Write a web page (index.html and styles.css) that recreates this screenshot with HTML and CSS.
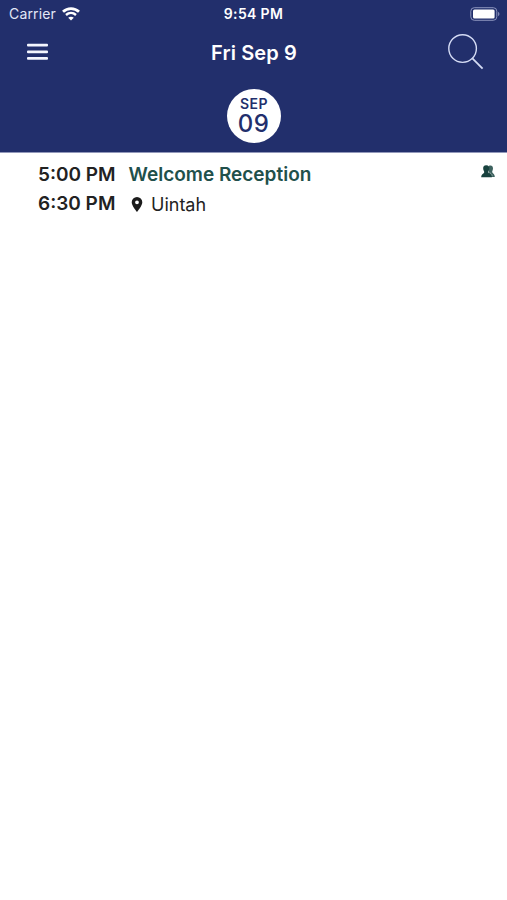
FILE: index.html
```html
<!DOCTYPE html>
<html lang="en">
<head>
  <meta charset="UTF-8">
  <meta name="viewport" content="width=device-width, initial-scale=1.0">
  <title>Schedule</title>
  <link rel="stylesheet" href="styles.css">
</head>
<body>
  <header class="header">
    <!-- Status bar -->
    <div class="status-bar">
      <div class="carrier">
        <span class="carrier-name">Carrier</span>
        <svg class="wifi" width="18" height="14" viewBox="0 0 18 14" fill="none" stroke="#fff">
          <path d="M1 4.8C5.500.6 12.500.6 17 4.800" stroke-width="2.8"/>
          <path d="M4 8c2.900-2.600 7.100-2.600 10 0" stroke-width="2.4"/>
          <path d="M9 13.600 6.200 10.800c1.600-1.500 4-1.500 5.600 0z" fill="#fff" stroke="none"/>
        </svg>
      </div>
      <span class="clock">9:54 PM</span>
      <svg class="battery" width="30" height="14" viewBox="0 0 30 14">
        <rect x=".8" y=".7" width="26" height="12.6" rx="3.5" fill="none" stroke="#8c94bd"/>
        <rect x="3" y="2.6" width="21.6" height="8.8" rx="1.5" fill="#fff"/>
        <path d="M28.1 4.800c1.800.8 1.800 3.600 0 4.400z" fill="#8c94bd"/>
      </svg>
    </div>

    <!-- Title bar -->
    <div class="nav-bar">
      <button class="icon-btn" aria-label="Menu">
        <svg width="21" height="18" viewBox="0 0 21 18" fill="#f4f6ff">
          <rect y=".8" width="21" height="2.8" rx="1"/>
          <rect y="7.4" width="21" height="2.8" rx="1"/>
          <rect y="14" width="21" height="2.8" rx="1"/>
        </svg>
      </button>
      <h1 class="title">Fri Sep 9</h1>
      <button class="icon-btn search" aria-label="Search">
        <svg width="36" height="36" viewBox="0 0 36 36" fill="none" stroke="#d5dcf5" stroke-width="1.4">
          <circle cx="14.6" cy="14.6" r="13.8"/>
          <path d="M24.4 24.4 34.6 34.6" stroke-width="1.8"/>
        </svg>
      </button>
    </div>

    <!-- Day picker -->
    <div class="days">
      <button class="day">
        <span class="month">SEP</span>
        <span class="date">09</span>
      </button>
    </div>
  </header>

  <main class="schedule">
    <article class="event">
      <div class="times">
        <span>5:00 PM</span>
        <span>6:30 PM</span>
      </div>
      <div class="details">
        <h2 class="event-name">Welcome Reception</h2>
        <div class="location">
          <svg width="12" height="15" viewBox="0 0 12 15">
            <path fill="#1c1c1c" fill-rule="evenodd" d="M6 0a5.3 5.3 0 0 0-5.3 5.3C.7 9 6 15 6 15s5.3-6 5.3-9.700A5.300 5.300 0 0 0 6 0zm0 3.400a1.900 1.900 0 1 1 0 3.800 1.900 1.900 0 0 1 0-3.800z"/>
          </svg>
          <span>Uintah</span>
        </div>
      </div>
      <svg class="people" width="14" height="13" viewBox="0 0 14 13">
        <path fill="#3e625f" d="M8 .8c2.800-1.200 4.400.8 3.900 3.400-.2 1.300-.7 1.700-.7 2.800 0 1.300 2.600 1.500 2.600 5H8z"/>
        <path fill="#19423f" d="M5.200.2c2.500 0 3.400 1.700 3.100 3.900-.2 1.500-.9 2-.9 3.100 0 1.600 3.500 1.400 3.500 5.100H.2c0-3.700 3-3.500 3-5.100 0-1.100-.8-1.600-1-3.100C1.900 1.900 2.900.2 5.200.2z"/>
        <path fill="none" stroke="#c5d3d1" stroke-width=".5" d="M8.500 7.200c.3 1.200 2.600 1.300 2.900 4"/>
      </svg>
    </article>
  </main>
</body>
</html>
```

FILE: styles.css
```css
* {
  box-sizing: border-box;
}
body {
  margin: 0;
  font-family: Inter, "Liberation Sans", sans-serif;
  background-color: #fff;
  color: #222;
}
h1,
h2 {
  margin: 0;
}
svg {
  display: block;
}
button {
  padding: 0;
  border: none;
  background: none;
  font-family: inherit;
  cursor: pointer;
}
.header {
  height: 153px;
  background-color: #222f6c;
  border-bottom: 1px solid #9298ba;
  color: #fff;
}
.status-bar {
  display: grid;
  grid-template-columns: 1fr auto 1fr;
  align-items: center;
  height: 27px;
  padding: 0 7px 0 9px;
  font-size: 14px;
}
.carrier {
  display: flex;
  align-items: center;
  gap: 6px;
}
.carrier-name {
  color: #e3e7f7;
  letter-spacing: 0.15px;
}
.clock {
  margin-right: 2px;
  font-weight: 600;
  letter-spacing: 0.35px;
}
.battery {
  justify-self: end;
}
.nav-bar {
  display: grid;
  grid-template-columns: 1fr auto 1fr;
  align-items: center;
  height: 50px;
  padding: 0 23px 0 27px;
}
.search {
  justify-self: end;
}
.title {
  margin-right: 3px;
  padding-top: 1px;
  font-size: 20px;
  font-weight: 600;
  letter-spacing: 0.1px;
}
.icon-btn {
  width: max-content;
}
.days {
  display: flex;
  justify-content: center;
  padding-top: 12px;
}
.day {
  display: flex;
  flex-direction: column;
  align-items: center;
  width: 54px;
  height: 54px;
  padding-top: 7px;
  border-radius: 50%;
  background-color: #fff;
  color: #222f6c;
}
.month {
  padding-left: 1px;
  font-size: 14px;
  line-height: 16px;
  font-weight: 600;
  letter-spacing: 0.5px;
}
.date {
  font-size: 24px;
  line-height: 24px;
  font-weight: 500;
  letter-spacing: 0.4px;
}
.event {
  display: flex;
  align-items: flex-start;
  padding: 7px 12px 0 38px;
}
.times {
  display: flex;
  flex-direction: column;
  width: 90.5px;
  font-size: 19px;
  line-height: 29px;
  font-weight: 600;
}
.details {
  flex: 1;
}
.event-name {
  font-size: 19px;
  line-height: 29px;
  font-weight: 600;
  color: #21504b;
}
.location {
  display: flex;
  align-items: center;
  gap: 8.5px;
  padding-left: 2px;
  font-size: 18px;
  line-height: 31px;
}
.people {
  margin-top: 5px;
}
```
